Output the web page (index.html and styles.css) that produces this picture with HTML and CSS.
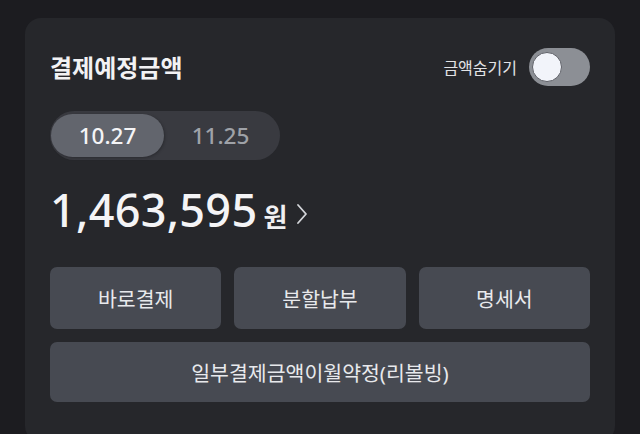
FILE: index.html
```html
<!DOCTYPE html>
<html lang="ko">
<head>
<meta charset="utf-8">
<link rel="stylesheet" href="styles.css">
</head>
<body>
<section class="card">
  <div class="header">
    <h1 class="title">결제예정금액</h1>
    <div class="hide-toggle">
      <span class="hide-label">금액숨기기</span>
      <span class="switch"><span class="knob"></span></span>
    </div>
  </div>
  <div class="segmented">
    <span class="seg seg-active">10.27</span>
    <span class="seg">11.25</span>
  </div>
  <div class="amount">
    <span class="amount-num">1,463,595</span>
    <span class="amount-unit">원</span>
    <svg class="chevron" width="12" height="22" viewBox="0 0 12 22"><path d="M2 2 L10 11 L2 20" fill="none" stroke="#d4d6da" stroke-width="1.8" stroke-linecap="round" stroke-linejoin="round"/></svg>
  </div>
  <div class="actions">
    <button class="btn">바로결제</button>
    <button class="btn">분할납부</button>
    <button class="btn">명세서</button>
  </div>
  <button class="btn btn-wide">일부결제금액이월약정(리볼빙)</button>
</section>
</body>
</html>
```
FILE: styles.css
```css
html, body {
  margin: 0;
  padding: 0;
  background: #1c1c20;
  height: 434px;
  overflow: hidden;
  font-family: "Noto Sans", "Noto Sans CJK KR", sans-serif;
  color: #eeeef0;
}
.card {
  margin: 18px 25px 0;
  background: #26272b;
  border-radius: 16px;
  padding: 30px 25px 40px;
}
.header {
  display: flex;
  align-items: center;
  justify-content: space-between;
  height: 38px;
}
.title {
  margin: 0;
  font-size: 24px;
  font-weight: 700;
  color: #f2f2f4;
  line-height: 38px;
  padding-top: 2px;
}
.hide-toggle {
  display: flex;
  align-items: center;
  gap: 12px;
}
.hide-label {
  font-size: 16px;
  color: #e2e3e6;
}
.switch {
  width: 61px;
  height: 38px;
  border-radius: 19px;
  background: #8c8f95;
  display: flex;
  align-items: center;
  padding-left: 3px;
  box-sizing: border-box;
}
.knob {
  width: 30px;
  height: 30px;
  border-radius: 50%;
  background: #f2f4fa;
  border: 1px solid #5f6168;
  box-sizing: border-box;
}
.segmented {
  margin-top: 25px;
  display: inline-flex;
  background: #393a40;
  border-radius: 25px;
  padding: 3px 3px 3px 1px;
  height: 49px;
  box-sizing: border-box;
}
.seg {
  width: 113px;
  display: flex;
  align-items: center;
  justify-content: center;
  border-radius: 22px;
  font-size: 22.5px;
  font-weight: 500;
  color: #9fa2a8;
}
.seg-active {
  background: #62656d;
  color: #f4f4f6;
  box-shadow: 1px 1px 3px rgba(0,0,0,0.25);
}
.amount {
  margin-top: 24px;
  display: flex;
  align-items: baseline;
  height: 52px;
}
.amount-num {
  font-size: 45px;
  font-weight: 500;
  line-height: 52px;
  color: #f4f4f6;
  letter-spacing: 0.3px;
}
.amount-unit {
  font-size: 26px;
  font-weight: 700;
  margin-left: 6px;
  color: #f0f0f2;
}
.chevron {
  margin-left: 9px;
  align-self: center;
  margin-top: 8px;
}
.actions {
  margin-top: 31px;
  display: grid;
  grid-template-columns: repeat(3, 1fr);
  gap: 13px;
}
.btn {
  border: none;
  background: #474a52;
  border-radius: 7px;
  height: 62px;
  font-family: "Noto Sans", "Noto Sans CJK KR", sans-serif;
  font-size: 20.5px;
  color: #e8e9ec;
  padding: 0;
}
.btn-wide {
  display: block;
  width: 100%;
  height: 60px;
  margin-top: 13px;
}
```
